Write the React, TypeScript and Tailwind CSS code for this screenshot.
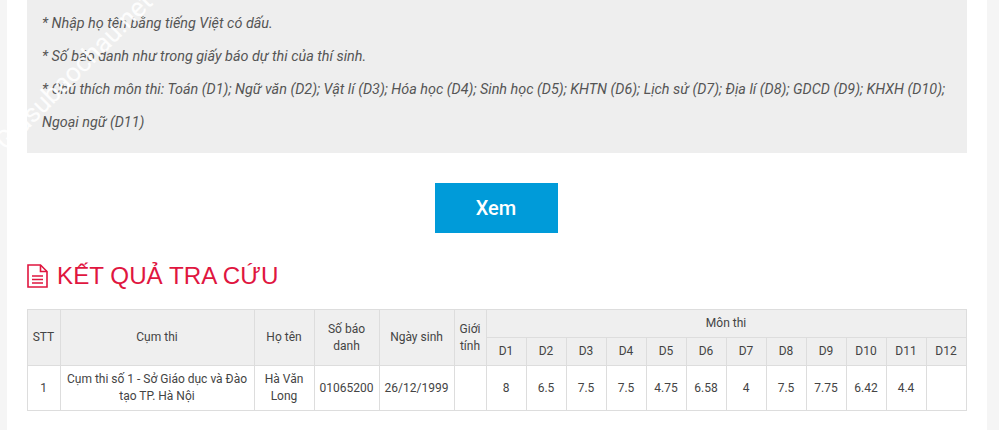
const subjects = ["D1", "D2", "D3", "D4", "D5", "D6", "D7", "D8", "D9", "D10", "D11", "D12"];
const scores = ["8", "6.5", "7.5", "7.5", "4.75", "6.58", "4", "7.5", "7.75", "6.42", "4.4", ""];

const cell = "border border-[#ddd] text-center align-middle font-normal p-0 pr-px";

export default function App() {
  return (
    <div className="relative h-[430px] overflow-hidden bg-[#f5f5f5] font-['Roboto',sans-serif] text-[#444]">
      <div className="mx-[7px] w-[980px] h-[430px] overflow-hidden bg-white px-5">
        {/* Notes */}
        <div className="h-[153px] bg-[#eee] px-[15px] pt-[7px] text-[14.38px] italic leading-[33px] text-[#555]">
          <p>* Nhập họ tên bằng tiếng Việt có dấu.</p>
          <p>* Số báo danh như trong giấy báo dự thi của thí sinh.</p>
          <p>
            * Chú thích môn thi: Toán (D1); Ngữ văn (D2); Vật lí (D3); Hóa học (D4); Sinh học (D5); KHTN (D6); Lịch sử (D7); Địa lí (D8); GDCD (D9); KHXH (D10); Ngoại ngữ (D11)
          </p>
        </div>

        <div className="mt-[30px] pr-[2px] flex justify-center">
          <button className="h-[50px] w-[123px] bg-[#009bd9] text-[20px] font-medium text-white">Xem</button>
        </div>

        {/* Result */}
        <h2 className="mt-[27px] flex h-8 items-center gap-[9px] font-['Liberation_Sans',sans-serif] text-[24.2px] leading-8 text-[#e0163f]">
          <svg viewBox="0 0 21 24" className="h-6 w-[21px]" fill="none" stroke="currentColor" strokeWidth="1.6">
            <path d="M1 1h12.5L20 7.5V23H1z" />
            <path d="M13.5 1v6.5H20" />
            <path d="M5 12h11M5 15.5h11M5 19h11" />
          </svg>
          KẾT QUẢ TRA CỨU
        </h2>

        <table className="mt-[17px] w-[940px] table-fixed border-collapse text-[12px] leading-[17px]">
          <colgroup>
            <col className="w-[33px]" />
            <col className="w-[194px]" />
            <col className="w-[60px]" />
            <col className="w-[65px]" />
            <col className="w-[75px]" />
            <col className="w-[32px]" />
            {subjects.map((s) => (
              <col key={s} className="w-[40px]" />
            ))}
          </colgroup>
          <thead className="bg-[#efefef]">
            <tr className="h-[28px]">
              <th rowSpan={2} className={cell}>STT</th>
              <th rowSpan={2} className={cell}>Cụm thi</th>
              <th rowSpan={2} className={cell}>Họ tên</th>
              <th rowSpan={2} className={cell}>Số báo<br />danh</th>
              <th rowSpan={2} className={cell}>Ngày sinh</th>
              <th rowSpan={2} className={cell}>Giới<br />tính</th>
              <th colSpan={12} className={cell}>Môn thi</th>
            </tr>
            <tr className="h-[28px]">
              {subjects.map((s) => (
                <th key={s} className={cell}>{s}</th>
              ))}
            </tr>
          </thead>
          <tbody>
            <tr className="h-[45px]">
              <td className={cell}>1</td>
              <td className={cell}>Cụm thi số 1 - Sở Giáo dục và Đào<br />tạo TP. Hà Nội</td>
              <td className={cell}>Hà Văn<br />Long</td>
              <td className={cell}>01065200</td>
              <td className={cell}>26/12/1999</td>
              <td className={cell}></td>
              {scores.map((v, i) => (
                <td key={i} className={cell}>{v}</td>
              ))}
            </tr>
          </tbody>
        </table>
      </div>

      {/* Watermark */}
      <div className="absolute left-[-41px] top-[52px] w-[230px] -rotate-45 text-center text-[26px] whitespace-nowrap text-white/90">
        Giasubaochau.net
      </div>
    </div>
  );
}
